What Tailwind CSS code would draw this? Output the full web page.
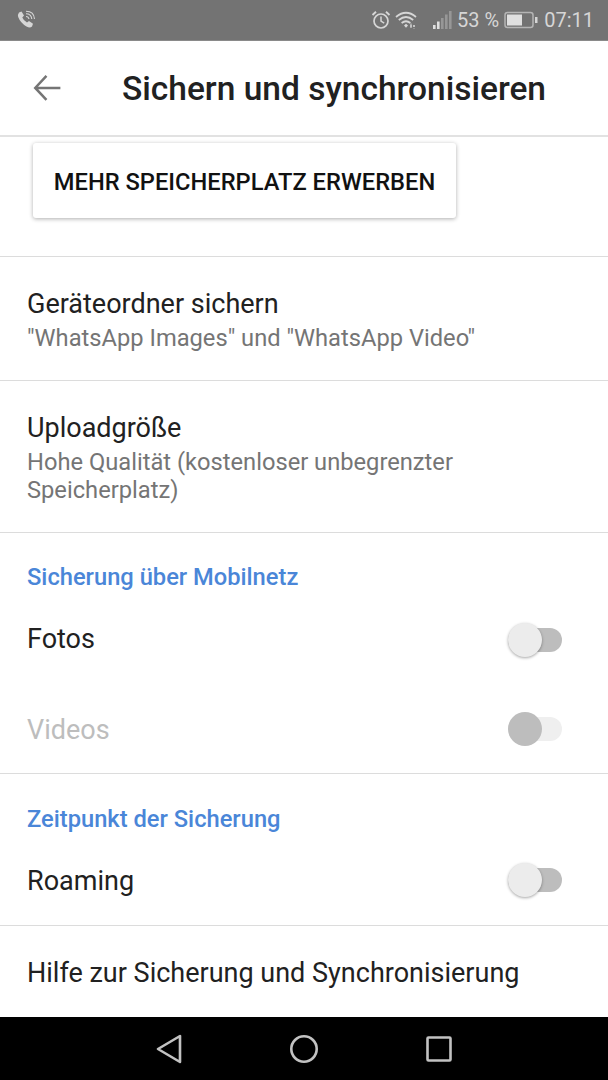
<!DOCTYPE html>
<html>
<head>
<meta charset="utf-8">
<script src="https://cdn.jsdelivr.net/npm/@tailwindcss/browser@4"></script>
</head>
<body class="bg-white">
<div class="w-[608px] h-[1080px] flex flex-col overflow-hidden font-['Roboto',sans-serif] text-[27px] text-[#212121]">
  <!-- status bar -->
  <div class="h-[40px] shrink-0 bg-[#737373] flex items-center pl-[16px] pr-[14px] text-[#d6d6d6]">
    <svg class="w-[20px] h-[20px]" viewBox="0 0 20 20" fill="none">
      <path d="M3 2.5 L5.5 1.5 L8 5.5 L6.3 7.5 Q7.5 10.5 11 12.5 L13 11 L17 13.8 L16 16.5 Q14 18.5 10.5 16.5 Q4.5 13 2.2 7 Q1.5 4.5 3 2.5 Z" fill="#d6d6d6"/>
      <path d="M10 6.5 Q12.5 6.5 13 9 M10 3.8 Q15.3 3.8 15.8 9 M10 1.2 Q18 1.2 18.5 9" stroke="#d6d6d6" stroke-width="1.1"/>
    </svg>
    <div class="flex-1"></div>
    <svg class="w-[20px] h-[20px]" viewBox="0 0 20 20" fill="none" stroke="#d6d6d6">
      <circle cx="10" cy="11" r="7" stroke-width="1.7"/>
      <path d="M10 6.5 V11.2 L13.2 13.2" stroke-width="1.5"/>
      <path d="M1.5 5 L5 1.8 M18.5 5 L15 1.8" stroke-width="1.9"/>
    </svg>
    <svg class="w-[24px] h-[20px] ml-[4px]" viewBox="0 0 24 20" fill="none" stroke="#d6d6d6" stroke-width="1.7">
      <path d="M1 7 Q11 -1.5 21 7 M3.8 10 Q11 4 18.2 10 M6.6 13 Q11 9.5 15.4 13"/>
      <path d="M9 15.5 L11 13.8 L13 15.5 L11 17.8 Z" fill="#d6d6d6" stroke="none"/>
      <path d="M16 13.5 V18 M19 15 V18.5 M15 16 H21" stroke-width="1.1" stroke-dasharray="2 1"/>
    </svg>
    <svg class="w-[20px] h-[20px] ml-[13px]" viewBox="0 0 20 20">
      <rect x="1" y="15" width="2.6" height="4" fill="#e0e0e0"/>
      <rect x="5" y="11.5" width="2.6" height="7.5" fill="#e0e0e0"/>
      <rect x="9" y="8" width="2.6" height="11" fill="#979797"/>
      <rect x="13" y="4.5" width="2.6" height="14.5" fill="#979797"/>
      <rect x="17" y="1" width="2.6" height="18" fill="#979797"/>
    </svg>
    <span class="text-[20px] leading-none ml-[5px] whitespace-nowrap">53 %</span>
    <svg class="w-[34px] h-[18px] ml-[5px]" viewBox="0 0 34 18" fill="none">
      <rect x="1" y="1.5" width="28" height="15" rx="2.5" stroke="#b5b5b5" stroke-width="1.5"/>
      <rect x="3" y="3.5" width="15" height="11" fill="#e0e0e0"/>
      <rect x="31" y="6" width="2.5" height="6" fill="#d6d6d6"/>
    </svg>
    <span class="text-[20px] leading-none ml-[6px]">07:11</span>
  </div>

  <!-- header -->
  <div class="h-[97px] shrink-0 flex items-center border-b-2 border-[#e2e2e2] border-t border-t-[#8a8a8a]">
    <svg class="w-[28px] h-[28px] ml-[33px]" viewBox="0 0 28 28" fill="none" stroke="#757575" stroke-width="2.6">
      <path d="M28 14 H2 M13.5 1.5 L1.8 14 L13.5 26.5" transform="translate(0.5 0.5) scale(0.96)"/>
    </svg>
    <h1 class="ml-[61px] text-[33.5px] font-medium whitespace-nowrap text-[#212121] relative top-[1px]">Sichern und synchronisieren</h1>
  </div>

  <!-- button -->
  <div class="h-[120px] shrink-0 pt-[6px] pl-[33px] border-b border-[#dcdcdc]">
    <div class="w-[423px] h-[75px] pt-[5px] rounded-[3px] flex items-center justify-center bg-white shadow-[0_1px_4px_rgba(0,0,0,0.32)] text-[23.7px] font-medium text-[#111] whitespace-nowrap">MEHR SPEICHERPLATZ ERWERBEN</div>
  </div>

  <!-- device folders -->
  <div class="h-[124px] shrink-0 pl-[27px] pt-[30px] border-b border-[#dcdcdc]">
    <div class="leading-[34px]">Geräteordner sichern</div>
    <div class="text-[23.7px] leading-[34px] text-[#757575] whitespace-nowrap">"WhatsApp Images" und "WhatsApp Video"</div>
  </div>

  <!-- upload size -->
  <div class="h-[152px] shrink-0 pl-[27px] pt-[30px] border-b border-[#dcdcdc]">
    <div class="leading-[34px]">Uploadgröße</div>
    <div class="text-[23.7px] leading-[28px] text-[#757575] w-[470px] mt-[3px]">Hohe Qualität (kostenloser unbegrenzter Speicherplatz)</div>
  </div>

  <!-- mobile -->
  <div class="h-[241px] shrink-0 border-b border-[#dcdcdc] flex flex-col">
    <div class="h-[61px] pl-[27px] pt-[28px] text-[23.7px] leading-[32px] font-medium text-[#4a86d8]">Sicherung über Mobilnetz</div>
    <div class="h-[91px] pl-[27px] pr-[46px] flex items-center justify-between">
      <span>Fotos</span>
      <div class="relative w-[54px] h-[24px] rounded-full bg-[#bdbdbd]">
        <div class="absolute left-0 top-[-5px] w-[34px] h-[34px] rounded-full bg-[#ececec] shadow-[0_1px_3px_rgba(0,0,0,0.35)]"></div>
      </div>
    </div>
    <div class="h-[88px] pl-[27px] pr-[46px] flex items-center justify-between">
      <span class="text-[#bdbdbd] relative top-[1px]">Videos</span>
      <div class="relative w-[54px] h-[24px] rounded-full bg-[#efefef]">
        <div class="absolute left-0 top-[-5px] w-[34px] h-[34px] rounded-full bg-[#bdbdbd]"></div>
      </div>
    </div>
  </div>

  <!-- time -->
  <div class="h-[152px] shrink-0 border-b border-[#dcdcdc] flex flex-col">
    <div class="h-[61px] pl-[27px] pt-[29px] text-[23.7px] leading-[32px] font-medium text-[#4a86d8]">Zeitpunkt der Sicherung</div>
    <div class="h-[90px] pl-[27px] pr-[46px] flex items-center justify-between">
      <span class="relative top-[1px]">Roaming</span>
      <div class="relative w-[54px] h-[24px] rounded-full bg-[#bdbdbd]">
        <div class="absolute left-0 top-[-5px] w-[34px] h-[34px] rounded-full bg-[#ececec] shadow-[0_1px_3px_rgba(0,0,0,0.35)]"></div>
      </div>
    </div>
  </div>

  <!-- help -->
  <div class="flex-1 pl-[27px] pt-[4px] flex items-center whitespace-nowrap">Hilfe zur Sicherung und Synchronisierung</div>

  <!-- nav bar -->
  <div class="h-[63px] shrink-0 bg-black flex items-center">
    <svg class="w-[26px] h-[30px] ml-[156px]" viewBox="0 0 26 30" fill="none" stroke="#c2c2c2" stroke-width="2.6" stroke-linejoin="round">
      <path d="M24 2 V28 L2 15 Z"/>
    </svg>
    <svg class="w-[30px] h-[30px] ml-[107px]" viewBox="0 0 30 30" fill="none" stroke="#c2c2c2" stroke-width="2.6">
      <circle cx="15" cy="15" r="12.7"/>
    </svg>
    <svg class="w-[26px] h-[26px] ml-[107px]" viewBox="0 0 26 26" fill="none" stroke="#c2c2c2" stroke-width="2.6" stroke-linejoin="round">
      <rect x="1.5" y="1.5" width="23" height="23" rx="1"/>
    </svg>
  </div>
</div>
</body>
</html>
